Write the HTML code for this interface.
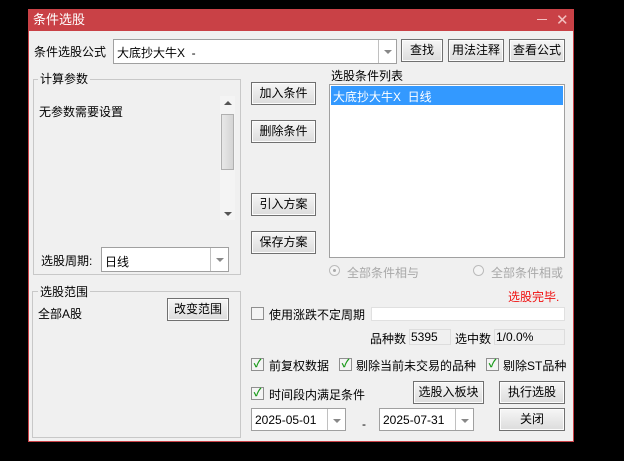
<!DOCTYPE html>
<html><head><meta charset="utf-8"><style>
*{box-sizing:border-box;margin:0;padding:0}
body{width:624px;height:461px;background:#000;position:relative;overflow:hidden;font:12px "Liberation Sans","Noto Sans CJK SC",sans-serif;color:#000}
.a{position:absolute;white-space:nowrap}
.win{left:28px;top:9px;width:546px;height:433px;background:#f0f0f0;border:1px solid #c94146;border-top:none}
.tb{left:28px;top:9px;width:546px;height:22px;background:#c94146;color:#fff;font-size:13px;line-height:22px;padding-left:5px}
.btn{position:absolute;border:1px solid #707070;background:linear-gradient(#f6f6f6,#dcdcdc);text-align:center;font-size:12px;box-shadow:inset 0 0 0 1px #fcfcfc}
.box{position:absolute;background:#fff;border:1px solid #a0a0a0}
.dd{position:absolute;top:0;right:0;bottom:0;width:18px;border-left:1px solid #c0c0c0}
.dd:after{content:"";position:absolute;left:5px;top:10px;border:4px solid transparent;border-top:4px solid #888}
.grp{position:absolute;border:1px solid #c8c8c8}
.lg{position:absolute;background:#f0f0f0;padding:0 2px;font-size:12px;line-height:14px}
.cb{position:absolute;width:13px;height:13px;border:1px solid #8f8f8f;background:#f4f4f4;font-size:11px;line-height:11px;color:#1a9a1a;text-align:center;font-weight:bold}
.t{font-size:12px}
</style></head><body>
<div class="a win"></div>
<div class="a tb">条件选股</div>
<div class="a" style="left:537px;top:19px;width:10px;height:1px;background:#f2c0c0"></div>
<div class="a" style="left:556px;top:11px;color:#f2c0c0;font-size:15px">✕</div>

<div class="a t" style="left:34px;top:43px">条件选股公式</div>
<div class="box" style="left:113px;top:39px;width:284px;height:25px"><span class="a t" style="left:3px;top:4px">大底抄大牛X&nbsp; -</span><div class="dd"></div></div>
<div class="btn" style="left:401px;top:39px;width:42px;height:23px;line-height:21px">查找</div>
<div class="btn" style="left:448px;top:39px;width:56px;height:23px;line-height:21px">用法注释</div>
<div class="btn" style="left:509px;top:39px;width:56px;height:23px;line-height:21px">查看公式</div>

<div class="grp" style="left:33px;top:79px;width:208px;height:196px"></div>
<div class="lg" style="left:38px;top:72px">计算参数</div>
<div class="a t" style="left:39px;top:103px">无参数需要设置</div>
<div class="a" style="left:220px;top:96px;width:15px;height:124px;background:#f4f4f4"></div>
<div class="a" style="left:221px;top:114px;width:13px;height:56px;background:linear-gradient(90deg,#e8e8e8,#d4d4d4);border:1px solid #b0b0b0"></div>
<div class="a" style="left:224px;top:101px;border:4px solid transparent;border-bottom:4px solid #555;border-top:none"></div>
<div class="a" style="left:224px;top:212px;border:4px solid transparent;border-top:4px solid #555;border-bottom:none"></div>
<div class="a t" style="left:41px;top:252px">选股周期:</div>
<div class="box" style="left:101px;top:247px;width:128px;height:25px"><span class="a t" style="left:3px;top:5px">日线</span><div class="dd"></div></div>

<div class="grp" style="left:32px;top:291px;width:209px;height:147px"></div>
<div class="lg" style="left:38px;top:285px">选股范围</div>
<div class="a t" style="left:38px;top:305px">全部A股</div>
<div class="btn" style="left:167px;top:298px;width:62px;height:23px;line-height:21px">改变范围</div>

<div class="btn" style="left:251px;top:82px;width:65px;height:23px;line-height:21px">加入条件</div>
<div class="btn" style="left:251px;top:120px;width:65px;height:23px;line-height:21px">删除条件</div>
<div class="btn" style="left:251px;top:193px;width:65px;height:23px;line-height:21px">引入方案</div>
<div class="btn" style="left:251px;top:231px;width:65px;height:23px;line-height:21px">保存方案</div>

<div class="a t" style="left:331px;top:67px">选股条件列表</div>
<div class="box" style="left:329px;top:84px;width:236px;height:174px"></div>
<div class="a t" style="left:331px;top:86px;width:232px;height:19px;background:#3399ff;color:#fff;padding:2px 2px">大底抄大牛X&nbsp; 日线</div>

<div class="a" style="left:329px;top:265px;width:11px;height:11px;border-radius:50%;border:1px solid #bbb;background:#f4f4f4"></div>
<div class="a" style="left:333px;top:269px;width:3px;height:3px;border-radius:50%;background:#aaa"></div>
<div class="a t" style="left:347px;top:264px;color:#a8a8a8">全部条件相与</div>
<div class="a" style="left:473px;top:265px;width:11px;height:11px;border-radius:50%;border:1px solid #bbb;background:#f4f4f4"></div>
<div class="a t" style="left:491px;top:264px;color:#a8a8a8">全部条件相或</div>

<div class="a t" style="left:508px;top:288px;color:#f01010">选股完毕.</div>
<div class="cb" style="left:251px;top:307px"></div>
<div class="a t" style="left:269px;top:306px">使用涨跌不定周期</div>
<div class="a" style="left:371px;top:307px;width:194px;height:14px;background:#fff;border:1px solid #e0e0e0"></div>
<div class="a t" style="left:370px;top:330px">品种数</div>
<div class="a t" style="left:409px;top:329px;width:42px;height:16px;border:1px solid #ddd;padding-left:1px;line-height:14px">5395</div>
<div class="a t" style="left:455px;top:330px">选中数</div>
<div class="a t" style="left:494px;top:329px;width:71px;height:16px;border:1px solid #ddd;padding-left:1px;line-height:14px">1/0.0%</div>

<div class="cb" style="left:251px;top:358px">✓</div><div class="a t" style="left:269px;top:357px">前复权数据</div>
<div class="cb" style="left:339px;top:358px">✓</div><div class="a t" style="left:356px;top:357px">剔除当前未交易的品种</div>
<div class="cb" style="left:486px;top:358px">✓</div><div class="a t" style="left:503px;top:357px">剔除ST品种</div>
<div class="cb" style="left:251px;top:387px">✓</div><div class="a t" style="left:269px;top:386px">时间段内满足条件</div>
<div class="btn" style="left:413px;top:381px;width:71px;height:23px;line-height:21px">选股入板块</div>
<div class="btn" style="left:499px;top:381px;width:66px;height:23px;line-height:21px">执行选股</div>
<div class="box" style="left:251px;top:408px;width:95px;height:23px"><span class="a" style="left:3px;top:4px">2025-05-01</span><div class="dd"></div></div>
<div class="a" style="left:362px;top:417px">-</div>
<div class="box" style="left:379px;top:408px;width:95px;height:23px"><span class="a" style="left:3px;top:4px">2025-07-31</span><div class="dd"></div></div>
<div class="btn" style="left:499px;top:408px;width:66px;height:23px;line-height:21px">关闭</div>
</body></html>
